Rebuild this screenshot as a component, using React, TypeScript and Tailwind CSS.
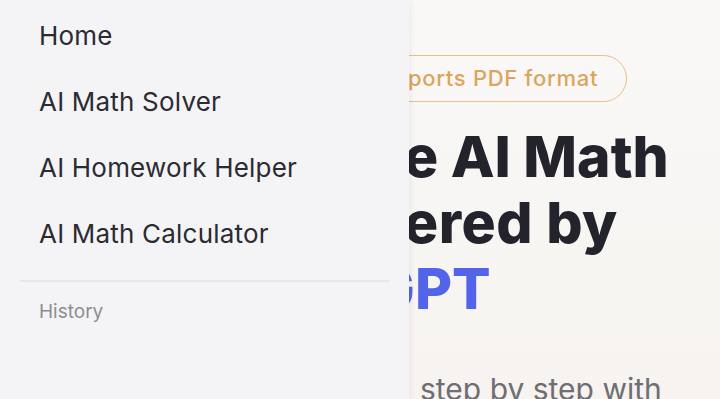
import React from 'react';

const menuItems = ['Home', 'AI Math Solver', 'AI Homework Helper', 'AI Math Calculator'];

export default function App() {
  return (
    <div
      className="relative h-[399px] w-[720px] overflow-hidden bg-gradient-to-b from-[#faf9f7] to-[#f6f3f0]"
      style={{ fontFamily: 'Inter, "Open Sans", sans-serif' }}
    >
      {/* hero behind the drawer */}
      <div className="flex flex-col items-start pt-[55px] pl-[404px]">
        <div className="-ml-[60px] flex h-[47px] items-center rounded-full border border-[#e6c089] pl-[63px] pr-[28px] text-[22px] font-medium tracking-[0.7px] text-[#dca55d] whitespace-nowrap">
          ports PDF format
        </div>
        <h1 className="mt-[22px] text-[57px] font-extrabold leading-[66px] text-[#23242b] whitespace-nowrap">
          <div>e AI Math</div>
          <div className="tracking-[0.5px]">ered by</div>
          <div className="-ml-[32px] text-[#5164ea]">GPT</div>
        </h1>
        <p className="mt-[49px] ml-[16px] text-[30px] leading-[36px] text-[#6e6e73] whitespace-nowrap">
          step by step with
        </p>
      </div>

      {/* drawer */}
      <aside className="absolute inset-y-0 left-0 w-[409px] bg-[#f4f4f6] shadow-[2px_0_6px_rgba(0,0,0,0.06)]">
        <nav className="flex flex-col pt-[2px]">
          {menuItems.map((item) => (
            <a
              key={item}
              className="flex h-[66px] items-center px-[39px] text-[26px] tracking-[0.2px] text-[#2b2b31]"
            >
              {item}
            </a>
          ))}
        </nav>
        <div className="mx-5 mt-[14px] h-[2px] bg-[#e6e6eb]" />
        <div className="mt-[16px] px-[39px] text-[19px] leading-[28px] text-[#8d8d92]">History</div>
      </aside>
    </div>
  );
}
